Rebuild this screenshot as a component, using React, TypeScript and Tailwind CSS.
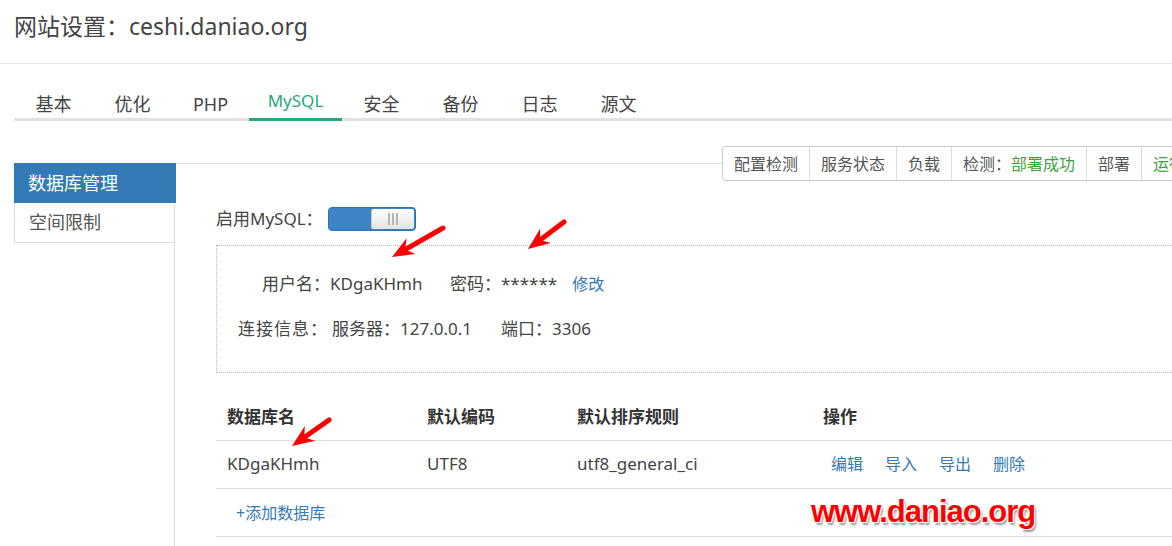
import React from 'react'

const TABS = [
  { label: '基本', w: 'w-[79px]' },
  { label: '优化', w: 'w-[79px]' },
  { label: 'PHP', w: 'w-[77px]' },
  { label: 'MySQL', w: 'w-[93px]' },
  { label: '安全', w: 'w-[79px]' },
  { label: '备份', w: 'w-[79px]' },
  { label: '日志', w: 'w-[79px]' },
  { label: '源文', w: 'w-[79px]' },
]

const TOOLS = [
  { label: '配置检测' },
  { label: '服务状态' },
  { label: '负载' },
  { label: '检测：', ok: '部署成功' },
  { label: '部署' },
  { label: '', ok: '运行状态' },
]

const ARROWS = [
  [443, 228, 392, 257],
  [564, 222, 528, 249],
  [329, 420, 292, 446],
]

function Arrow({ x1, y1, x2, y2 }: { x1: number; y1: number; x2: number; y2: number }) {
  const len = Math.hypot(x2 - x1, y2 - y1)
  const ux = (x2 - x1) / len
  const uy = (y2 - y1) / len
  const nx = -uy
  const ny = ux
  const bx = x2 - ux * 22
  const by = y2 - uy * 22
  const mx = x2 - ux * 15
  const my = y2 - uy * 15
  const pts = [
    [x2, y2],
    [bx + nx * 9, by + ny * 9],
    [mx, my],
    [bx - nx * 9, by - ny * 9],
  ]
    .map((p) => p.join(','))
    .join(' ')
  return (
    <g>
      <line x1={x1} y1={y1} x2={mx + ux * 2} y2={my + uy * 2} stroke="#ff0000" strokeWidth={5} strokeLinecap="round" />
      <polygon points={pts} fill="#ff0000" />
    </g>
  )
}

function Toggle() {
  return (
    <div className="flex h-[24px] w-[88px] rounded-[4px] border border-[#2f6fae] bg-[#3d84c6] p-[1px]">
      <div className="flex-1" />
      <div className="flex w-[43px] items-center justify-center gap-[2px] rounded-[2px] border-l border-[#c9c9c9] bg-gradient-to-b from-white to-[#e3e3e3]">
        <span className="h-[12px] w-[2px] bg-[#b5b5b5]" />
        <span className="h-[12px] w-[2px] bg-[#b5b5b5]" />
        <span className="h-[12px] w-[2px] bg-[#b5b5b5]" />
      </div>
    </div>
  )
}

export default function App() {
  return (
    <div className="relative h-[546px] w-[1172px] overflow-hidden bg-white font-['Noto_Sans','Noto_Sans_CJK_SC',sans-serif] text-[#444]">
      {/* title */}
      <div className="h-[64px] border-b border-[#e6e6e6] pl-[14px] pt-[9px]">
        <h1 className="text-[23px] leading-[34px] font-normal text-[#444]">网站设置：ceshi.daniao.org</h1>
      </div>

      {/* tabs */}
      <div className="ml-[14px] mt-[21px] flex border-b-[3px] border-[#e2e2e2]">
        {TABS.map((t) => {
          const active = t.label === 'MySQL'
          return (
            <div
              key={t.label}
              className={
                t.w +
                (active
                  ? ' mb-[-3px] flex h-[36px] items-end justify-center border-b-[3px] border-[#26a878] pb-[5px] text-[17px] leading-[24px] text-[#26a878]'
                  : ' flex h-[33px] items-end justify-center pb-[2px] text-[18px] leading-[24px] text-[#444]')
              }
            >
              {t.label}
            </div>
          )
        })}
      </div>

      {/* main */}
      <div className="mt-[42px] flex">
        <div className="relative z-10 ml-[14px] w-[161px] text-[18px]">
          <div className="flex h-[40px] w-[162px] items-center bg-[#337ab7] pl-[14px] text-white">数据库管理</div>
          <div className="flex h-[40px] items-center border-b border-l border-[#ddd] pl-[14px] text-[#555]">空间限制</div>
        </div>

        <div className="relative ml-[-1px] h-[400px] flex-1 border-l border-t border-[#ddd] pl-[41px] text-[17px]">
          {/* toolbar */}
          <div className="absolute left-[547px] top-[-18px] flex h-[35px] whitespace-nowrap rounded-l-[4px] border border-[#ccc] bg-white text-[16px] text-[#555]">
            {TOOLS.map((b, i) => (
              <div key={i} className={'flex items-center px-[11px] ' + (i > 0 ? 'border-l border-[#ddd]' : '')}>
                {b.label}
                {b.ok && <span className="text-[#3ea13e]">{b.ok}</span>}
              </div>
            ))}
          </div>

          <div className="mt-[43px] flex h-[24px] items-center">
            <span className="w-[112px]">启用MySQL：</span>
            <Toggle />
          </div>

          <div className="mt-[14px] flex w-[1000px] flex-col gap-[15px] border border-dotted border-[#bbb] pb-[28px] pt-[23px] leading-[30px]">
            <div className="flex">
              <span className="w-[113px] text-right">用户名：</span>
              <span className="w-[120px]">KDgaKHmh</span>
              <span>密码：</span>
              <span>******</span>
              <span className="ml-[15px] text-[16px] text-[#337ab7]">修改</span>
            </div>
            <div className="flex">
              <span className="w-[21px]" />
              <span className="w-[92px] tracking-[1px]">连接信息：</span>
              <span className="w-[171px] pl-[2px]">服务器：127.0.0.1</span>
              <span>端口：3306</span>
            </div>
          </div>

          <table className="mt-[19px] w-[1000px] border-collapse text-left">
            <colgroup>
              <col className="w-[200px]" />
              <col className="w-[150px]" />
              <col className="w-[246px]" />
              <col />
            </colgroup>
            <thead>
              <tr className="h-[48px] border-b border-[#ddd] text-[#333]">
                <th className="pl-[11px] pt-[2px] font-bold">数据库名</th>
                <th className="pl-[11px] pt-[2px] font-bold">默认编码</th>
                <th className="pl-[11px] pt-[2px] font-bold">默认排序规则</th>
                <th className="pl-[11px] pt-[2px] font-bold">操作</th>
              </tr>
            </thead>
            <tbody>
              <tr className="h-[48px] border-b border-[#ddd]">
                <td className="pl-[11px]">KDgaKHmh</td>
                <td className="pl-[11px]">UTF8</td>
                <td className="pl-[11px]">utf8_general_ci</td>
                <td className="pl-[19px]">
                  <div className="flex gap-[22px] text-[16px] text-[#337ab7]">
                    <span>编辑</span>
                    <span>导入</span>
                    <span>导出</span>
                    <span>删除</span>
                  </div>
                </td>
              </tr>
              <tr className="h-[48px] border-b border-[#ddd]">
                <td colSpan={4} className="pl-[20px] pt-[2px] text-[16px] text-[#337ab7]">
                  +添加数据库
                </td>
              </tr>
            </tbody>
          </table>
        </div>
      </div>

      {/* annotations */}
      <svg className="pointer-events-none absolute left-0 top-0" width={1172} height={546}>
        {ARROWS.map(([x1, y1, x2, y2], i) => (
          <Arrow key={i} x1={x1} y1={y1} x2={x2} y2={y2} />
        ))}
      </svg>
      <div className="absolute left-[811px] top-[496px] font-['Liberation_Sans',sans-serif] text-[31px] font-bold leading-none tracking-[-1px] text-[#ff0000] [text-shadow:1px_1px_0_#fff,-1px_-1px_0_#fff,1px_-1px_0_#fff,-1px_1px_0_#fff,2px_3px_2px_#999]">
        www.daniao.org
      </div>
    </div>
  )
}
